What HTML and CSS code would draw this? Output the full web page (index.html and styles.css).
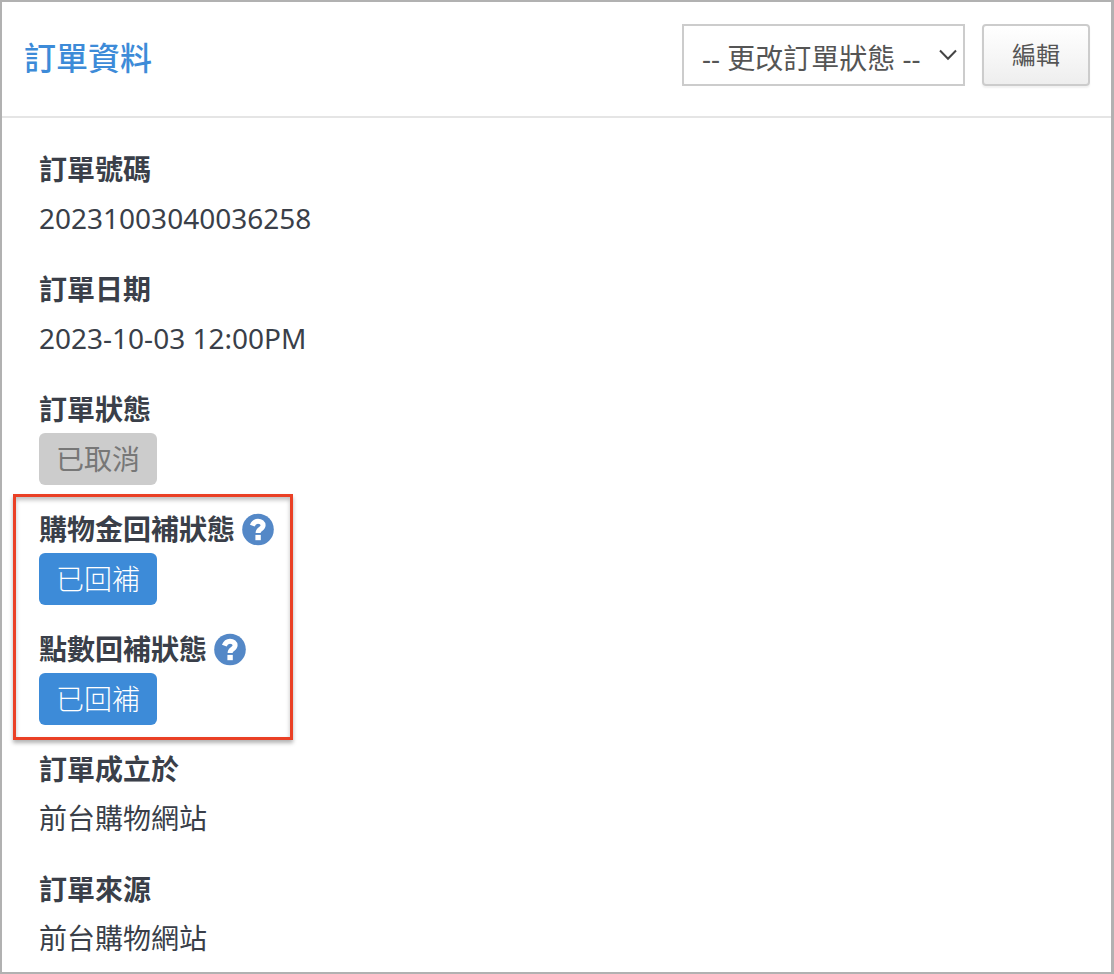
FILE: index.html
```html
<!DOCTYPE html>
<html lang="zh-Hant">
<head>
<meta charset="utf-8">
<meta name="viewport" content="width=device-width, initial-scale=1">
<title>訂單資料</title>
<link rel="stylesheet" href="styles.css">
</head>
<body>
<main class="panel">
  <header class="panel-header">
    <h1 class="panel-title">訂單資料</h1>
    <div class="actions">
      <div class="select-wrap">
        <select class="status-select" aria-label="更改訂單狀態">
          <option>-- 更改訂單狀態 --</option>
        </select>
        <svg class="chevron" viewBox="0 0 18 12" aria-hidden="true"><path d="M1 1.500 9 9.800 17 1.500"/></svg>
      </div>
      <button class="edit-button" type="button">編輯</button>
    </div>
  </header>
  <dl class="details">
    <div class="item"><dt>訂單號碼</dt><dd>20231003040036258</dd></div>
    <div class="item"><dt>訂單日期</dt><dd>2023-10-03 12:00PM</dd></div>
    <div class="item"><dt>訂單狀態</dt><dd><span class="badge badge-muted">已取消</span></dd></div>
    <div class="item item-marked">
      <dt>購物金回補狀態
        <svg class="help" viewBox="0 0 32 32" role="img" aria-label="說明"><circle cx="16" cy="16.500" r="15.800"/><path class="hook" d="M10.300 12.600C11.500 9.400 13.400 8.200 16 8.200c3.200 0 5.100 1.700 5.100 4.100 0 3.900-5 3.600-5 7.600"/><path class="dot" d="M13.400 21.900h5.400v5.300h-5.400z"/></svg>
      </dt>
      <dd><span class="badge badge-primary">已回補</span></dd>
    </div>
    <div class="item">
      <dt>點數回補狀態
        <svg class="help" viewBox="0 0 32 32" role="img" aria-label="說明"><circle cx="16" cy="16.500" r="15.800"/><path class="hook" d="M10.300 12.600C11.500 9.400 13.400 8.200 16 8.200c3.200 0 5.100 1.700 5.100 4.100 0 3.900-5 3.600-5 7.600"/><path class="dot" d="M13.400 21.900h5.400v5.300h-5.400z"/></svg>
      </dt>
      <dd><span class="badge badge-primary">已回補</span></dd>
    </div>
    <div class="item"><dt>訂單成立於</dt><dd>前台購物網站</dd></div>
    <div class="item"><dt>訂單來源</dt><dd>前台購物網站</dd></div>
  </dl>
</main>
</body>
</html>
```
FILE: styles.css
```css
* {
  box-sizing: border-box;
}

body {
  margin: 0;
  background: #fff;
  color: #3a3f49;
  font-family: "Noto Sans", "Noto Sans CJK TC", sans-serif;
  font-size: 28px;
}

.panel {
  min-height: 100vh;
  border: 2px solid #b1b1b1;
  border-right-width: 3px;
}

.panel-header {
  display: flex;
  justify-content: space-between;
  align-items: flex-start;
  padding: 22px 21px 30px 22px;
  border-bottom: 2px solid #e5e5e5;
}

.panel-title {
  margin: 0;
  padding-top: 2px;
  color: #3d8bd8;
  font-size: 32px;
  font-weight: 500;
  font-family: "Noto Sans CJK TC", sans-serif;
  line-height: 60px;
}

.actions {
  display: flex;
  gap: 17px;
}

.select-wrap {
  position: relative;
}

.status-select {
  appearance: none;
  display: block;
  height: 62px;
  margin: 0;
  padding: 6px 42px 0 18px;
  border: 2px solid #ccc;
  border-radius: 0;
  background: #fff;
  color: #555;
  font: inherit;
}

.chevron {
  position: absolute;
  top: 25px;
  right: 8px;
  width: 18px;
  height: 12px;
  fill: none;
  stroke: #444;
  stroke-width: 2;
  pointer-events: none;
}

.edit-button {
  height: 62px;
  padding: 0 28px 4px;
  border: 2px solid #ccc;
  border-radius: 4px;
  background: linear-gradient(#fff, #eee);
  box-shadow: 0 2px 2px rgba(0, 0, 0, 0.06);
  color: #555;
  font: inherit;
  font-size: 24px;
}

.details {
  display: flex;
  flex-direction: column;
  align-items: flex-start;
  gap: 24px;
  margin: 0;
  padding: 31px 37px 0;
}

.item {
  display: grid;
  gap: 4px;
}

dt {
  display: flex;
  align-items: center;
  gap: 7px;
  height: 40px;
  font-weight: 700;
  line-height: 40px;
}

dd {
  margin: 0;
  height: 52px;
  line-height: 50px;
}

.item:last-child dd {
  height: 32px;
}

.badge {
  display: inline-block;
  padding: 0 17px;
  border-radius: 6px;
  line-height: 52px;
  vertical-align: top;
}

.badge-muted {
  background: #ccc;
  color: #777;
}

.badge-primary {
  background: #3d8bd8;
  color: #fff;
  font-weight: 300;
  font-family: "Noto Sans CJK TC", sans-serif;
  line-height: 50px;
  padding-bottom: 2px;
}

.help {
  width: 32px;
  height: 32px;
  overflow: visible;
  fill: #5488c7;
}

.help .hook {
  fill: none;
  stroke: #fff;
  stroke-width: 5;
}

.help .dot {
  fill: #fff;
}

.item-marked {
  position: relative;
}

.item-marked::after {
  content: "";
  position: absolute;
  top: -15px;
  right: -19px;
  bottom: -135px;
  left: -26px;
  border: 3px solid #ea4025;
  box-shadow: 0 3px 4px rgba(0, 0, 0, 0.3), inset 0 3px 4px rgba(0, 0, 0, 0.25);
  pointer-events: none;
}
```
